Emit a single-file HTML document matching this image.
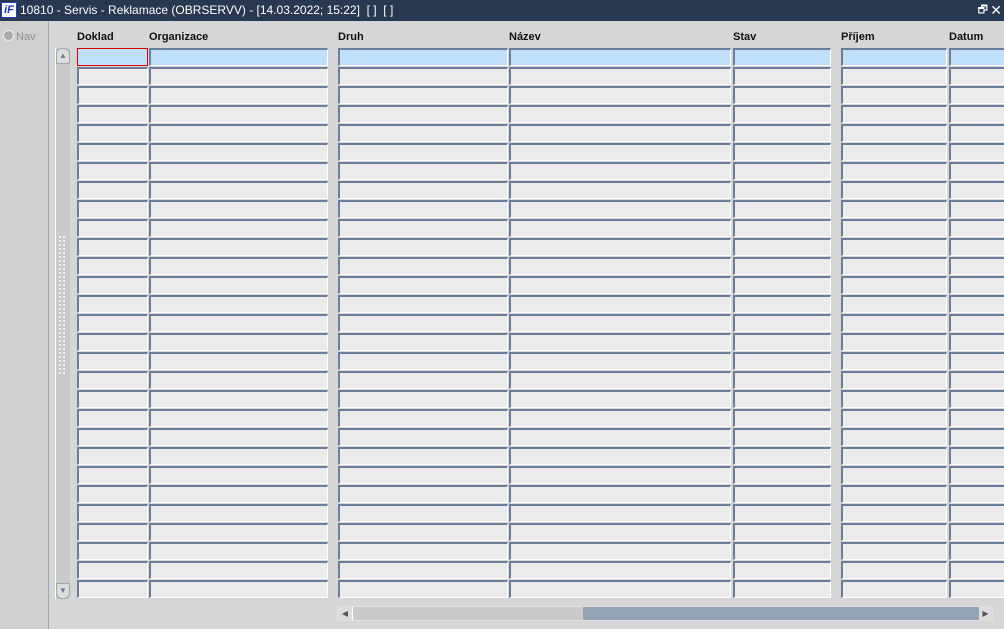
<!DOCTYPE html>
<html><head><meta charset="utf-8"><style>
body{margin:0;width:1004px;height:629px;overflow:hidden;background:#d6d6d6;font-family:"Liberation Sans",sans-serif;position:relative}
.tb{position:absolute;left:0;top:0;width:1004px;height:21px;background:#283850;color:#fff;font-size:12px;line-height:21px}
.logo{position:absolute;left:1px;top:2px;width:16px;height:16px;background:#fff;border:1px solid #2040c0;box-sizing:border-box;color:#1030c0;font-weight:bold;font-style:italic;font-size:11px;line-height:14px;text-align:center}
.left{position:absolute;left:0;top:21px;width:48px;height:608px;background:#d0d0d0;border-right:1px solid #9aa8bc}
.nav{position:absolute;left:3px;top:30px;font-size:11px;color:#909090}
.nav i{display:inline-block;width:9px;height:9px;border-radius:50%;background:#aaa;border:1px solid #eee;vertical-align:-1px;margin-right:2px}
.h{position:absolute;top:31px;font-size:11px;font-weight:bold;color:#111}
.c{position:absolute;height:18px;box-sizing:border-box;background:#ebebeb;border-top:2px solid #6a7d9c;border-left:2px solid #6a7d9c;border-right:1px solid #fff;border-bottom:1px solid #fff}
.c.s{background:#c0dffa}
.vs{position:absolute;left:55px;top:48px;width:15px;height:551px;background:#cacaca;border-left:1px solid #fff;box-sizing:border-box}
.hs{position:absolute;left:337px;top:606px;width:656px;height:15px;background:#94a3b6;border:1px solid #e0e0e0;box-sizing:border-box}
</style></head><body>
<div class="tb"><div class="logo">iF</div><span style="position:absolute;left:20px">10810 - Servis - Reklamace (OBRSERVV) - [14.03.2022; 15:22]&nbsp; [ ]&nbsp; [ ]</span><span style="position:absolute;right:16px;font-size:11px">🗗</span><span style="position:absolute;right:2px;font-size:14px">✕</span></div>
<div class="left"><div class="nav" style="top:9px"><i></i>Nav</div></div>
<div class="h" style="left:77px">Doklad</div>
<div class="h" style="left:149px">Organizace</div>
<div class="h" style="left:338px">Druh</div>
<div class="h" style="left:509px">Název</div>
<div class="h" style="left:733px">Stav</div>
<div class="h" style="left:841px">Příjem</div>
<div class="h" style="left:949px">Datum</div>
<div class="vs">
<div style="position:absolute;left:0;top:0;width:14px;height:16px;border:1px solid #9aa;border-radius:6px 6px 0 0;background:#ddd;box-sizing:border-box;font-size:8px;text-align:center;line-height:14px;color:#6a7d9c">▲</div>
<div style="position:absolute;left:0;bottom:0;width:14px;height:16px;border:1px solid #9aa;border-radius:0 0 6px 6px;background:#ddd;box-sizing:border-box;font-size:8px;text-align:center;line-height:14px;color:#6a7d9c">▼</div>
<div style="position:absolute;left:3px;top:188px;width:7px;height:140px;background:repeating-linear-gradient(#fff 0 2px,transparent 2px 4px);opacity:.8;-webkit-mask:linear-gradient(90deg,#000 0 2px,transparent 2px 4px,#000 4px 6px,transparent 6px)"></div>
</div>
<div class="hs">
<div style="position:absolute;left:0;top:0;width:14px;height:13px;background:#ddd;font-size:8px;line-height:13px;text-align:center;color:#555">◀</div>
<div style="position:absolute;left:14px;top:0;width:230px;height:13px;background:#cacaca;border-left:1px solid #fff"></div>
<div style="position:absolute;right:0;top:0;width:13px;height:13px;background:#ddd;font-size:8px;line-height:13px;text-align:center;color:#555">▶</div>
</div>
<div id="g"></div>
<script>
var cols=[[77,71],[149,179],[338,170],[509,222],[733,98],[841,106],[949,60]];
var h='';
for(var r=0;r<29;r++){for(var i=0;i<cols.length;i++){var y=48+r*19;h+='<div class="c'+(r==0?' s':'')+'" style="left:'+cols[i][0]+'px;top:'+y+'px;width:'+cols[i][1]+'px'+(r==0&&i==0?';background:#c0dffa;border:1px solid #e00000':'')+'"></div>';}}
document.getElementById('g').innerHTML=h;
</script>
</body></html>
